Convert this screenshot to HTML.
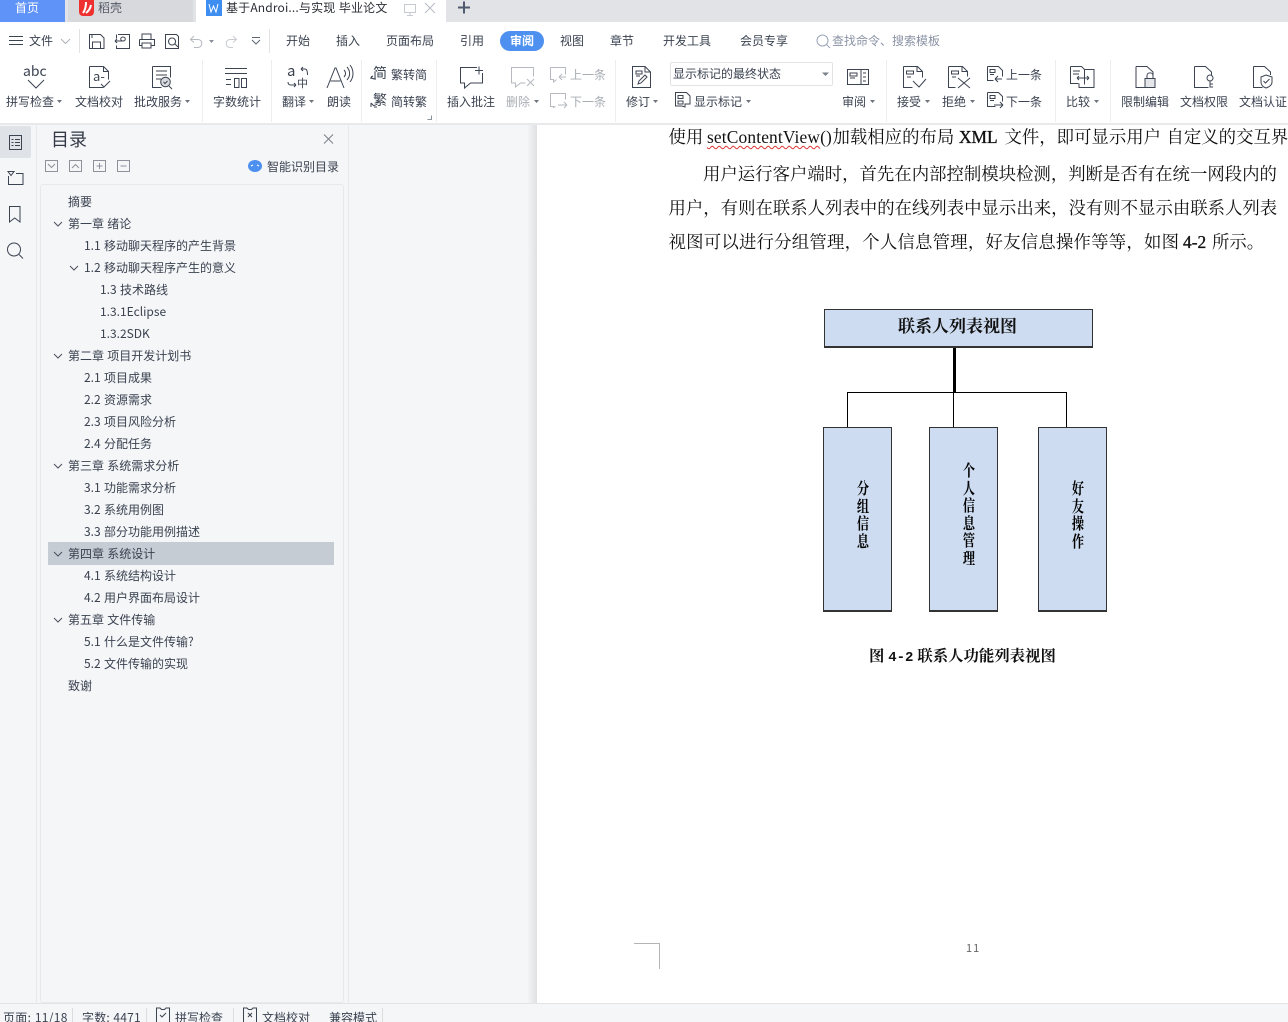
<!DOCTYPE html>
<html><head><meta charset="utf-8"><style>
html,body{margin:0;padding:0;width:1288px;height:1022px;overflow:hidden;background:#fff}
body{position:relative;font-family:"Noto Sans CJK SC","Liberation Sans",sans-serif;font-size:12px;color:#3a4250}
.b{position:absolute}
.t{position:absolute;white-space:nowrap;line-height:16px;font-size:12px;color:#3a4250;word-spacing:.6px}
.g{color:#a9adb4}
.d{position:absolute;white-space:nowrap;font-family:"Liberation Serif","Noto Serif CJK SC",serif;font-size:17.4px;line-height:24px;color:#111}
.x{-webkit-text-stroke:.35px #111}
.v{position:absolute;width:20px;text-align:center;font-family:"Noto Serif CJK SC",serif;font-weight:700;font-size:16px;line-height:17.6px;color:#000;transform:scaleX(.76)}
.s{position:absolute;top:60px;width:1px;height:62px;background:#eceef0}
svg{position:absolute;left:0;top:0}
</style></head><body>
<!-- tab bar -->
<div class="b" style="left:0;top:0;width:1288px;height:22px;background:#e1e3e7"></div>
<div class="b" style="left:0;top:0;width:65px;height:22px;background:#5f93f8"></div>
<div class="b" style="left:68px;top:0;width:125px;height:22px;background:#d8d9dd"></div>
<div class="b" style="left:196px;top:0;width:250px;height:22px;background:#fff"></div>
<div class="t" style="left:15px;top:0;color:#fff">首页</div>
<div class="b" style="left:79px;top:0;width:15px;height:16px;background:#ee3030;border-radius:0 0 4px 4px"></div>
<div class="t" style="left:98px;top:0;color:#555b66">稻壳</div>
<div class="b" style="left:206px;top:0;width:16px;height:16px;background:#3d8ef0"></div>
<div class="t" style="left:226px;top:0;color:#2c2f36;letter-spacing:.16px">基于Androi...与实现 毕业论文</div>

<!-- menu row -->
<div class="t" style="left:29px;top:33px">文件</div>
<div class="t" style="left:286px;top:33px">开始</div>
<div class="t" style="left:336px;top:33px">插入</div>
<div class="t" style="left:386px;top:33px">页面布局</div>
<div class="t" style="left:460px;top:33px">引用</div>
<div class="b" style="left:500px;top:31px;width:44px;height:20px;border-radius:10px;background:#4d90f0"></div>
<div class="t" style="left:510px;top:33px;color:#fff;font-weight:700">审阅</div>
<div class="t" style="left:560px;top:33px">视图</div>
<div class="t" style="left:610px;top:33px">章节</div>
<div class="t" style="left:663px;top:33px">开发工具</div>
<div class="t" style="left:740px;top:33px">会员专享</div>
<div class="t" style="left:832px;top:33px;color:#8a93a5">查找命令、搜索模板</div>

<!-- ribbon separators -->
<div class="s" style="left:202px"></div><div class="s" style="left:271px"></div><div class="s" style="left:361px"></div><div class="s" style="left:436px"></div><div class="s" style="left:615px"></div><div class="s" style="left:886px"></div><div class="s" style="left:1055px"></div><div class="s" style="left:1110px"></div>
<div class="b" style="left:0;top:123px;width:1288px;height:2px;background:#e8e9eb"></div>

<!-- ribbon labels -->
<div class="t" style="left:23px;top:63px;font-size:14px;color:#3a4250">abc</div>
<div class="t" style="left:93px;top:68px;font-size:13px">a-</div>
<div class="t" style="left:287px;top:63px;font-size:15px">a</div>
<div class="t" style="left:297px;top:75px;font-size:11px">中</div>
<div class="t" style="left:6px;top:94px">拼写检查</div>
<div class="t" style="left:75px;top:94px">文档校对</div>
<div class="t" style="left:134px;top:94px">批改服务</div>
<div class="t" style="left:213px;top:94px">字数统计</div>
<div class="t" style="left:282px;top:94px">翻译</div>
<div class="t" style="left:327px;top:94px">朗读</div>
<div class="t" style="left:391px;top:67px">繁转简</div>
<div class="t" style="left:391px;top:94px">简转繁</div>
<div class="t" style="left:373px;top:65px;font-size:14px">简</div>
<div class="t" style="left:373px;top:92px;font-size:14px">繁</div>
<div class="t" style="left:447px;top:94px">插入批注</div>
<div class="t g" style="left:506px;top:94px">删除</div>
<div class="t g" style="left:570px;top:67px">上一条</div>
<div class="t g" style="left:570px;top:94px">下一条</div>
<div class="t" style="left:626px;top:94px">修订</div>
<div class="b" style="left:670px;top:62px;width:161px;height:22px;border:1px solid #e2e3e6;border-radius:2px"></div>
<div class="t" style="left:673px;top:66px">显示标记的最终状态</div>
<div class="t" style="left:694px;top:94px">显示标记</div>
<div class="t" style="left:842px;top:94px">审阅</div>
<div class="t" style="left:897px;top:94px">接受</div>
<div class="t" style="left:942px;top:94px">拒绝</div>
<div class="t" style="left:1006px;top:67px">上一条</div>
<div class="t" style="left:1006px;top:94px">下一条</div>
<div class="t" style="left:1066px;top:94px">比较</div>
<div class="t" style="left:1121px;top:94px">限制编辑</div>
<div class="t" style="left:1180px;top:94px">文档权限</div>
<div class="t" style="left:1239px;top:94px">文档认证</div>

<!-- left panels -->
<div class="b" style="left:0;top:125px;width:537px;height:878px;background:#f5f6f8"></div>
<div class="b" style="left:36px;top:125px;width:1px;height:878px;background:#e6e8eb"></div>
<div class="b" style="left:348px;top:125px;width:1px;height:878px;background:#e6e8eb"></div>
<div class="b" style="left:527px;top:125px;width:10px;height:878px;background:linear-gradient(90deg,#f5f6f8,#dfe0e3)"></div>
<div class="b" style="left:0;top:126px;width:31px;height:32px;background:#dfe2e7;border-radius:0 2px 2px 0"></div>
<div class="t" style="left:51px;top:127px;font-size:18px;line-height:24px;color:#333a46">目录</div>
<div class="t" style="left:267px;top:159px">智能识别目录</div>
<div class="b" style="left:40px;top:184px;width:302px;height:817px;border:1px solid #e7e9ec;border-radius:3px"></div>
<div class="b" style="left:48px;top:542px;width:286px;height:23px;background:#c5ccd4"></div>

<!-- toc -->
<div class="t" style="left:68px;top:194px">摘要</div>
<div class="t" style="left:68px;top:216px">第一章 绪论</div>
<div class="t" style="left:84px;top:238px">1.1 移动聊天程序的产生背景</div>
<div class="t" style="left:84px;top:260px">1.2 移动聊天程序产生的意义</div>
<div class="t" style="left:100px;top:282px">1.3 技术路线</div>
<div class="t" style="left:100px;top:304px">1.3.1Eclipse</div>
<div class="t" style="left:100px;top:326px">1.3.2SDK</div>
<div class="t" style="left:68px;top:348px">第二章 项目开发计划书</div>
<div class="t" style="left:84px;top:370px">2.1 项目成果</div>
<div class="t" style="left:84px;top:392px">2.2 资源需求</div>
<div class="t" style="left:84px;top:414px">2.3 项目风险分析</div>
<div class="t" style="left:84px;top:436px">2.4 分配任务</div>
<div class="t" style="left:68px;top:458px">第三章 系统需求分析</div>
<div class="t" style="left:84px;top:480px">3.1 功能需求分析</div>
<div class="t" style="left:84px;top:502px">3.2 系统用例图</div>
<div class="t" style="left:84px;top:524px">3.3 部分功能用例描述</div>
<div class="t" style="left:68px;top:546px">第四章 系统设计</div>
<div class="t" style="left:84px;top:568px">4.1 系统结构设计</div>
<div class="t" style="left:84px;top:590px">4.2 用户界面布局设计</div>
<div class="t" style="left:68px;top:612px">第五章 文件传输</div>
<div class="t" style="left:84px;top:634px">5.1 什么是文件传输?</div>
<div class="t" style="left:84px;top:656px">5.2 文件传输的实现</div>
<div class="t" style="left:68px;top:678px">致谢</div>

<!-- document -->
<div class="d" style="left:668.500px;top:125px">使用</div>
<div class="d" style="left:707px;top:125px;letter-spacing:.15px"><span style="text-decoration:underline wavy #d33;text-decoration-thickness:1px;text-underline-offset:2px">setContentView</span>()</div>
<div class="d" style="left:832.500px;top:125px">加载相应的布局</div>
<div class="d x" style="left:959px;top:125px">XML</div>
<div class="d" style="left:1004.500px;top:125px">文件，即可显示用户</div>
<div class="d" style="left:1166.500px;top:125px">自定义的交互界</div>
<div class="d" style="left:703px;top:162px">用户运行客户端时，首先在内部控制模块检测，判断是否有在统一网段内的</div>
<div class="d" style="left:668.500px;top:196px">用户，有则在联系人列表中的在线列表中显示出来，没有则不显示由联系人列表</div>
<div class="d" style="left:668.500px;top:230px;letter-spacing:.22px">视图可以进行分组管理，个人信息管理，好友信息操作等等，如图</div>
<div class="d x" style="left:1183px;top:230px">4-2</div>
<div class="d" style="left:1212px;top:230px">所示。</div>

<!-- diagram -->
<div class="b" style="left:824px;top:309px;width:267px;height:36px;background:#cddcf0;border:1px solid #333;border-bottom-width:2px"></div>
<div class="t" style="left:898px;top:313px;font-family:'Noto Serif CJK SC',serif;font-weight:700;font-size:17px;line-height:24px;color:#111">联系人列表视图</div>
<div class="b" style="left:953px;top:348px;width:3px;height:44px;background:#000"></div>
<div class="b" style="left:847px;top:392px;width:220px;height:1px;background:#000"></div>
<div class="b" style="left:847px;top:392px;width:1px;height:35px;background:#000"></div>
<div class="b" style="left:953px;top:392px;width:1px;height:35px;background:#000"></div>
<div class="b" style="left:1066px;top:392px;width:1px;height:35px;background:#000"></div>
<div class="b" style="left:823px;top:427px;width:67px;height:182px;background:#cddcf0;border:1px solid #333;border-bottom-width:2px"></div>
<div class="b" style="left:929px;top:427px;width:67px;height:182px;background:#cddcf0;border:1px solid #333;border-bottom-width:2px"></div>
<div class="b" style="left:1038px;top:427px;width:67px;height:182px;background:#cddcf0;border:1px solid #333;border-bottom-width:2px"></div>
<div class="v" style="left:853px;top:479px">分<br>组<br>信<br>息</div>
<div class="v" style="left:959px;top:461px">个<br>人<br>信<br>息<br>管<br>理</div>
<div class="v" style="left:1068px;top:479px">好<br>友<br>操<br>作</div>
<div class="t" style="left:869px;top:644px;font-family:'Noto Serif CJK SC',serif;font-weight:700;font-size:15.4px;line-height:22px;color:#111;word-spacing:0">图 <span style="font-family:'Liberation Mono',monospace;font-size:14px">4-2</span> 联系人功能列表视图</div>
<div class="t" style="left:966px;top:940px;font-size:11px;letter-spacing:1px;color:#666">11</div>

<!-- status -->
<div class="b" style="left:0;top:1003px;width:1288px;height:1px;background:#e3e4e7"></div>
<div class="b" style="left:0;top:1004px;width:1288px;height:18px;background:#f5f6f8"></div>
<div class="t" style="left:3px;top:1010px;letter-spacing:.3px">页面: 11/18</div>
<div class="t" style="left:82px;top:1010px;letter-spacing:.2px">字数: 4471</div>
<div class="t" style="left:175px;top:1010px">拼写检查</div>
<div class="t" style="left:262px;top:1010px">文档校对</div>
<div class="t" style="left:329px;top:1010px">兼容模式</div>
<div class="b" style="left:72px;top:1008px;width:1px;height:14px;background:#ddd"></div>
<div class="b" style="left:146px;top:1008px;width:1px;height:14px;background:#ddd"></div>
<div class="b" style="left:233px;top:1008px;width:1px;height:14px;background:#ddd"></div>
<div class="b" style="left:382px;top:1008px;width:1px;height:14px;background:#ddd"></div>

<svg width="1288" height="1022" viewBox="0 0 1288 1022" fill="none" stroke="#3c4452" stroke-width="1">
<!-- tab icons -->
<path d="M83 13 Q86 9 86 2 M86 13 Q90 10 91 5" stroke="#fff" stroke-width="2"/>
<path d="M209 4l2 8 2.500-6 2.500 6 2-8" stroke="#fff"/>
<path d="M404.500 4.500h11v8h-11zM410 12.500v3M407 15.500h6" stroke="#c6cad1"/>
<path d="M425 3l10 10M435 3l-10 10" stroke="#b6bac2"/>
<path d="M458 7.500h12M464 1.500v12" stroke="#4f5a6e" stroke-width="2"/>
<!-- menu row -->
<path d="M9 36.500h14M9 40.500h14M9 44.500h14"/>
<path d="M61 39l4.500 4.500L70 39" stroke="#aeb2b9"/>
<path d="M79.500 29v24M269.500 29v24" stroke="#e0e2e5"/>
<path d="M89.500 34.500h11l3.500 3.500v10.500h-14.500zM92.500 48v-6h8v6M92 35v3"/>
<path d="M118 34.500h11.500v14h-13v-3M116.500 34.500v4M115 41h8c3 0 3-4 0-4s-3 4 0 4M115 41l2-2M115 41l2 2"/>
<path d="M142 39v-5h9v5M139.500 39.500h15v6h-3M142.500 45.500h-3v-6M142 43h9v5h-9z"/>
<path d="M165.500 34.500h11l2 2v12h-13zM172 38a3.500 3.500 0 1 0 .1 0M175 44l3 3"/>
<path d="M194 36l-3.500 3.500 3.500 3M191 39.500h7c5 0 5 8 0 8h-4" stroke="#b6bac0"/>
<path d="M233 36l3.500 3.500-3.500 3M236 39.500h-6c-5 0-5 8 0 8h3" stroke="#c8cbd0"/>
<path d="M252 37.500h8M252 40l4 4 4-4" stroke="#5d6573"/>
<path d="M209 40l2.500 3 2.500-3z" fill="#8b9099" stroke="none"/>
<circle cx="822.500" cy="40.500" r="5.500" stroke="#9aa5b8"/><path d="M826.500 44.500l3.500 3.500" stroke="#9aa5b8"/>
<!-- spell -->
<path d="M28 80l8 8 8-8"/>
<!-- proof -->
<path d="M89.500 66.500h14l5 5v8M103.500 66.500v5h5M89.500 66.500v21h14"/>
<path d="M101 84l3 3 6-6"/>
<!-- service -->
<path d="M152.500 66.500h18v11M152.500 66.500v21h9M156 71h11M156 75h11M156 79h5"/>
<circle cx="165.500" cy="82" r="4.800" fill="#d8dade"/><path d="M169 86l3 3M163.500 82l1.500 1.500 2.500-2.500"/>
<!-- word count -->
<path d="M225 68.500h22M225 73.500h22M226 79.500h5M226 84.500h5M234.500 78.500h4.500v9h-4.500zM241.500 78.500h5v9h-5z"/>
<!-- translate arrows -->
<path d="M301 69h4c2.500 0 2.500 4 2.500 6M301 69l2-2M301 69l2 2"/>
<path d="M288 82c0 2 1 3 3 3h5M296 85l-2-2M296 85l-2 2"/>
<!-- read -->
<path d="M327 88l8-20h1l8 20M330.500 81h10M344 70c2 2 2 5 0 7M347 67c3.500 4 3.500 9 0 13M350 65c4 5 4 12 0 17"/>
<path d="M371 77c1 2 3 2 5 2M371 77l2-1M371 77l0 2"/>
<path d="M371 103l3 3M371 103v4M374 107h3"/>
<path d="M431.500 115.500v4h-4" stroke="#8c929c"/>
<!-- comment -->
<path d="M477 67.500h-16.500v15.500h4v5l6-5h12v-10M475 70.500h8M479 66.500v8"/>
<path d="M528 67.500h-16.500v15.500h4v4l5-4h5M511.500 67.500h22v9M527 79l7 7M534 79l-7 7" stroke="#b6b9bf"/>
<path d="M550.500 67.500h15v7M550.500 67.500v12h3v2.500l3-2.500M566 77h-7M559 77l3-3M559 77l3 3" stroke="#b6b9bf"/>
<path d="M550.500 93.500h15v6M550.500 93.500v13h3v1l2-1M558 105h9M567 105l-3-3M567 105l-3 3" stroke="#b6b9bf"/>
<!-- revision -->
<path d="M632.500 66.500h12.500l5.500 5.500v15.500h-18zM636 71h6v3h-6zM636 76h4M638 84l1-3 6-6 2 2-6 6zM645 66.500v5.500h5.500"/>
<path d="M822 72.500h7l-3.500 3.500z" fill="#7a808a" stroke="none"/>
<path d="M675.500 92.500h11l3.500 3.500v8h-5v3l-3-1h-6.500zM678 95.500h5v3h-5zM678 101h5v3h-5z"/>
<!-- review -->
<path d="M847.500 69.500h21v15h-21zM861 69.500v15M850 73h7v3h-7zM850 78h5M863 73h3M863 77h3M863 81h3"/>
<!-- accept / reject -->
<path d="M903.500 66.500h14l5 5v6M917 66.500v5h5M903.500 66.500v21h9M906.500 71h7v3h-7zM907 77h4M913 81l6 6 7-8"/>
<path d="M948.500 66.500h14l5 5v5M962 66.500v5h5M948.500 66.500v21h7M951.500 71h7v3h-7zM952 77h4M958 78l12 10M970 78l-12 10"/>
<path d="M987.500 66.500h11l4 4v6M987.500 66.500v14h6M990 69.500h5v3h-5zM990 74.500h4M1002 79h-7M995 79l3-3M995 79l3 3"/>
<path d="M987.500 92.500h11l4 4v5M987.500 92.500v14h8M990 95.500h5v3h-5zM990 100.500h4M994 105h9M1003 105l-3-3M1003 105l-3 3"/>
<!-- compare -->
<path d="M1070.500 66.500h11l3 3v15M1070.500 66.500v17h8M1084.500 69.500h9.500v18h-15v-4M1073 71h7M1073 74h6M1077 78h12M1077 78l2-2M1077 78l2 2M1089 78l-2-2M1089 78l-2 2"/>
<!-- protect -->
<path d="M1136 66.500h11l6 5.500v4M1136 66.500v21h9"/><path d="M1145 78.500h10v9h-10z" fill="#e4e6ea"/><path d="M1147 78v-2.500c0-3.500 6-3.500 6 0v2.500"/>
<path d="M1194.500 66.500h11l6 5.500v3M1194.500 66.500v21h14"/><circle cx="1210" cy="78" r="3"/><path d="M1210 81v6.500M1210 84h3M1210 87h3"/>
<path d="M1253.500 66.500h11l6 5.500v3M1253.500 66.500v21h9"/><path d="M1266 75l6 2v5c0 3-3 5-6 6-3-1-5-3-5-6v-5zM1263.500 81l2 2 4-4"/>
<!-- little carets -->
<g fill="#6e747f" stroke="none">
<path d="M57 100h5l-2.500 3zM185 100h5l-2.500 3zM309 100h5l-2.500 3zM534 100h5l-2.500 3zM653 100h5l-2.500 3zM746 100h5l-2.500 3zM870 100h5l-2.500 3zM925 100h5l-2.500 3zM970 100h5l-2.500 3zM1094 100h5l-2.500 3z"/>
</g>
<!-- rail -->
<path d="M9.500 135.500h12v14h-12zM11.500 139.500h2M15 139.500h5M11.500 142.500h2M15 142.500h5M11.500 145.500h2M15 145.500h5"/>
<path d="M8 171.500h6l-3 4zM8.500 176v8.500h14.500v-11h-7"/>
<path d="M9.500 206.500h10.500v15.500l-5.300-4-5.200 4z"/>
<circle cx="14" cy="249.500" r="6.500"/><path d="M19 254.500l4 4"/>
<!-- panel -->
<path d="M324 134.500l9 9M333 134.500l-9 9" stroke="#7a808a"/>
<g stroke="#8d929b">
<path d="M45.500 160.500h12v11h-12zM48 164l3.500 3.500L55 164"/>
<path d="M69.500 160.500h12v11h-12zM72 168l3.500-3.500L79 168"/>
<path d="M93.500 160.500h12v11h-12zM96.500 166h6M99.500 163v6"/>
<path d="M117.500 160.500h12v11h-12zM120.500 166h6"/>
</g>
<ellipse cx="255" cy="166" rx="7" ry="6" fill="#4d90f0" stroke="none"/><path d="M251 166l2-1M259 166l-2-1" stroke="#fff"/>
<!-- toc chevrons -->
<g stroke="#4a515e">
<path d="M54 222l4 4 4-4M70 266l4 4 4-4M54 354l4 4 4-4M54 464l4 4 4-4M54 552l4 4 4-4M54 618l4 4 4-4"/>
</g>
<!-- corner crop -->
<path d="M634 943.500h26M659.500 943v26" stroke="#b4b4b4"/>
<!-- status icons -->
<path d="M156.500 1022v-14h3.500l1.500 1.500h3l1.500-1.500h3.500v14M160 1015l2 2 4-4"/>
<path d="M243.500 1022v-14h3.500l1.500 1.500h3l1.500-1.500h3.500v14M248 1013l4 4M252 1013l-4 4"/>
</svg>
</body></html>
